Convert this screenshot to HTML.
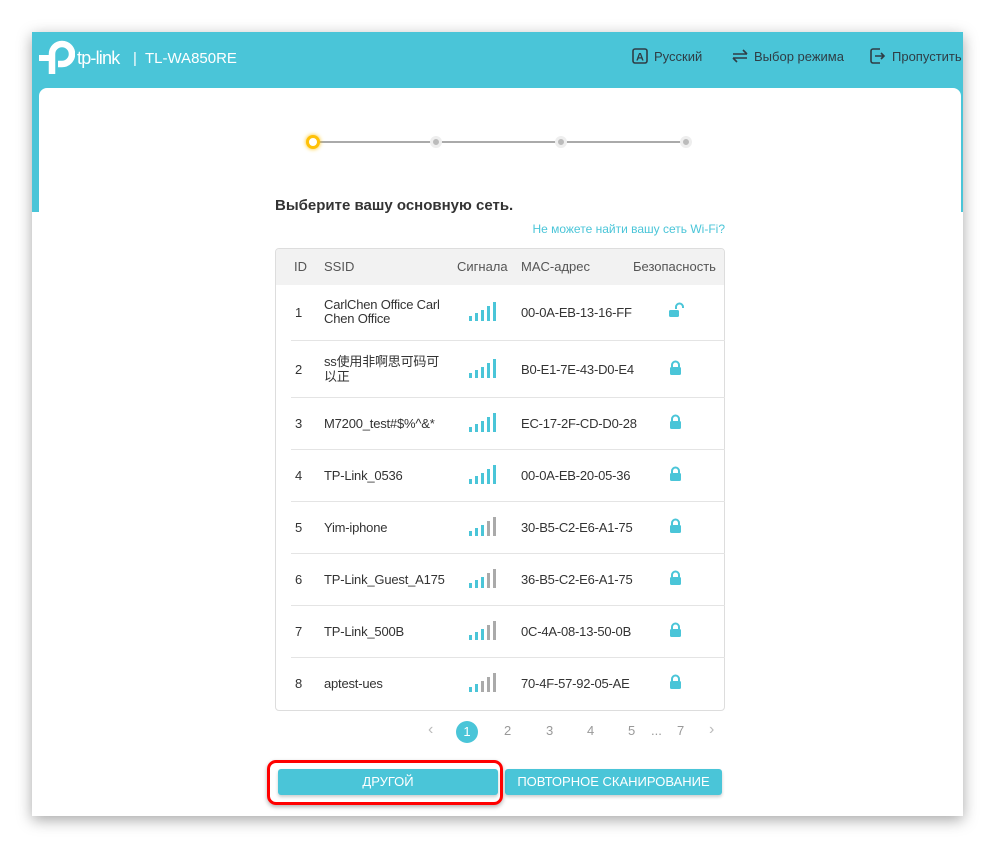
<!DOCTYPE html>
<html><head><meta charset="utf-8"><style>
*{box-sizing:border-box;margin:0;padding:0}
body{width:996px;height:849px;background:#fff;position:relative;overflow:hidden;font-family:"Liberation Sans","Noto Sans CJK SC",sans-serif;color:#333}
.win{position:absolute;left:32px;top:32px;width:931px;height:784px;background:#fff;box-shadow:0 4px 14px rgba(0,0,0,.35)}
.hdr{position:absolute;left:0;top:0;width:100%;height:180px;background:#4ac5d8}
.card{position:absolute;left:7px;top:56px;width:922px;height:728px;background:#fff;border-radius:8px 8px 0 0}
.logo{position:absolute;left:7px;top:6px;color:#fff}
.nav{position:absolute;top:16px;font-size:13px;color:#2f3d45;display:flex;align-items:center}
.step{position:absolute;top:104px;width:12px;height:12px;border-radius:50%;background:#bbb;border:3px solid #eee}
.tbl{position:absolute;left:275px;top:248px;width:450px;height:463px;border:1px solid #ddd;border-radius:4px;overflow:hidden}
.th{height:36px;background:#f2f2f2;font-size:13px;color:#555;position:relative}
.row{position:absolute;left:16px;right:0;border-bottom:1px solid #e4e4e4;font-size:13px;color:#333;letter-spacing:-0.2px}
.row span{position:absolute}
.pg{position:absolute;top:723px;font-size:13px;color:#999}
.btn{position:absolute;top:769px;height:26px;background:#4ac5d8;color:#fff;font-size:13px;text-align:center;line-height:26px;border-radius:3px;box-shadow:0 2px 3px rgba(0,0,0,.2)}
</style></head><body>
<div class="win">
<div class="hdr"></div>
<div class="logo">
<svg width="36" height="36" viewBox="0 0 36 36" style="position:absolute;left:0;top:2px"><path d="M13 34V14a10 10 0 1 1 10 10h-4" fill="none" stroke="#fff" stroke-width="6.5"/><rect x="0" y="15" width="11" height="6" fill="#fff"/></svg>
<span style="position:absolute;left:38px;top:10px;font-size:18px;white-space:nowrap;letter-spacing:-0.8px">tp-link</span>
<span style="position:absolute;left:94px;top:12px;font-size:15px;white-space:nowrap">|&nbsp; TL-WA850RE</span>
</div>
<div class="nav" style="left:600px"><svg width="16" height="16" style="margin-right:6px"><rect x="1" y="1" width="14" height="14" rx="2" fill="none" stroke="#2f3d45" stroke-width="1.6"/><text x="8" y="12.5" font-size="11" font-weight="bold" text-anchor="middle" fill="#2f3d45" font-family="Liberation Sans">A</text></svg>Русский</div>
<div class="nav" style="left:700px"><svg width="16" height="16" style="margin-right:6px"><path d="M1 6h14M11 2l4 4M15 10H1M5 14l-4-4" fill="none" stroke="#2f3d45" stroke-width="1.6"/></svg>Выбор режима</div>
<div class="nav" style="left:838px"><svg width="16" height="16" style="margin-right:6px"><path d="M10 1H3a2 2 0 0 0-2 2v10a2 2 0 0 0 2 2h7M5 8h9M11 5l3 3-3 3" fill="none" stroke="#2f3d45" stroke-width="1.6"/></svg>Пропустить</div>
<div class="card"></div>
</div>
<div style="position:absolute;left:313px;top:141px;width:374px;height:2px;background:#aaa"></div>
<div class="step" style="left:306px;top:135px;width:14px;height:14px;background:#fff;border:3px solid #ffc107;box-shadow:0 0 4px #ffc107"></div>
<div class="step" style="left:430px;top:136px"></div>
<div class="step" style="left:555px;top:136px"></div>
<div class="step" style="left:680px;top:136px"></div>
<div style="position:absolute;left:275px;top:197px;font-size:15px;font-weight:bold;color:#333">Выберите вашу основную сеть.</div>
<div style="position:absolute;right:271px;top:222px;font-size:12px;color:#4ac5d8">Не можете найти вашу сеть Wi-Fi?</div>
<div class="tbl">
<div class="th"><span style="position:absolute;left:18px;top:10px">ID</span><span style="position:absolute;left:48px;top:10px">SSID</span><span style="position:absolute;left:181px;top:10px">Сигнала</span><span style="position:absolute;left:245px;top:10px">MAC-адрес</span><span style="position:absolute;left:357px;top:10px">Безопасность</span></div>
</div>
<div style="position:absolute;left:275px;top:248px;width:450px;">
<div class="row" style="top:36px;height:57px"><span style="left:4px;top:21px">1</span><span style="left:33px;top:14px;line-height:14px;width:130px">CarlChen Office Carl Chen Office</span><span style="left:230px;top:21px">00-0A-EB-13-16-FF</span></div>
<div class="row" style="top:93px;height:57px"><span style="left:4px;top:21px">2</span><span style="left:33px;top:13px;line-height:15px;width:120px">ss使用非啊思可码可以正</span><span style="left:230px;top:21px">B0-E1-7E-43-D0-E4</span></div>
<div class="row" style="top:150px;height:52px"><span style="left:4px;top:18px">3</span><span style="left:33px;top:18px">M7200_test#$%^&amp;*</span><span style="left:230px;top:18px">EC-17-2F-CD-D0-28</span></div>
<div class="row" style="top:202px;height:52px"><span style="left:4px;top:18px">4</span><span style="left:33px;top:18px">TP-Link_0536</span><span style="left:230px;top:18px">00-0A-EB-20-05-36</span></div>
<div class="row" style="top:254px;height:52px"><span style="left:4px;top:18px">5</span><span style="left:33px;top:18px">Yim-iphone</span><span style="left:230px;top:18px">30-B5-C2-E6-A1-75</span></div>
<div class="row" style="top:306px;height:52px"><span style="left:4px;top:18px">6</span><span style="left:33px;top:18px">TP-Link_Guest_A175</span><span style="left:230px;top:18px">36-B5-C2-E6-A1-75</span></div>
<div class="row" style="top:358px;height:52px"><span style="left:4px;top:18px">7</span><span style="left:33px;top:18px">TP-Link_500B</span><span style="left:230px;top:18px">0C-4A-08-13-50-0B</span></div>
<div class="row" style="top:410px;height:52px;border:none"><span style="left:4px;top:18px">8</span><span style="left:33px;top:18px">aptest-ues</span><span style="left:230px;top:18px">70-4F-57-92-05-AE</span></div>
</div>
<svg width="996" height="849" style="position:absolute;left:0;top:0">
<defs>
<g id="s5"><rect x="0" y="14" width="3" height="5" fill="#4ac5d8"/><rect x="6" y="11" width="3" height="8" fill="#4ac5d8"/><rect x="12" y="8" width="3" height="11" fill="#4ac5d8"/><rect x="18" y="4" width="3" height="15" fill="#4ac5d8"/><rect x="24" y="0" width="3" height="19" fill="#4ac5d8"/></g>
<g id="s3"><rect x="0" y="14" width="3" height="5" fill="#4ac5d8"/><rect x="6" y="11" width="3" height="8" fill="#4ac5d8"/><rect x="12" y="8" width="3" height="11" fill="#4ac5d8"/><rect x="18" y="4" width="3" height="15" fill="#aaa"/><rect x="24" y="0" width="3" height="19" fill="#aaa"/></g>
<g id="s2"><rect x="0" y="14" width="3" height="5" fill="#4ac5d8"/><rect x="6" y="11" width="3" height="8" fill="#4ac5d8"/><rect x="12" y="8" width="3" height="11" fill="#aaa"/><rect x="18" y="4" width="3" height="15" fill="#aaa"/><rect x="24" y="0" width="3" height="19" fill="#aaa"/></g>
<g id="lk"><path d="M3 6V4a3.5 3.5 0 0 1 7 0v2" fill="none" stroke="#4ac5d8" stroke-width="2"/><rect x="1" y="6" width="11" height="8" rx="1.5" fill="#4ac5d8"/></g>
</defs>
<g transform="translate(469,0)"><use href="#s5" y="302"/><use href="#s5" y="359"/><use href="#s5" y="413"/><use href="#s5" y="465"/><use href="#s3" y="517"/><use href="#s3" y="569"/><use href="#s3" y="621"/><use href="#s2" y="673"/></g>
<g transform="translate(669,0)">
<g transform="translate(0,303)"><path d="M7 6V4a3.5 3.5 0 0 1 7 0v1" fill="none" stroke="#4ac5d8" stroke-width="2"/><rect x="0" y="7" width="10" height="7" rx="1.5" fill="#4ac5d8"/></g>
<use href="#lk" y="361"/><use href="#lk" y="415"/><use href="#lk" y="467"/><use href="#lk" y="519"/><use href="#lk" y="571"/><use href="#lk" y="623"/><use href="#lk" y="675"/></g>
</svg>
<span class="pg" style="left:428px;font-size:16px;top:721px;color:#bbb">‹</span>
<div style="position:absolute;left:456px;top:721px;width:22px;height:22px;border-radius:50%;background:#4ac5d8;color:#fff;font-size:13px;text-align:center;line-height:22px">1</div>
<span class="pg" style="left:504px">2</span><span class="pg" style="left:546px">3</span><span class="pg" style="left:587px">4</span><span class="pg" style="left:628px">5</span><span class="pg" style="left:651px">...</span><span class="pg" style="left:677px">7</span>
<span class="pg" style="left:709px;font-size:16px;top:721px;color:#bbb">›</span>
<div class="btn" style="left:505px;width:217px">ПОВТОРНОЕ СКАНИРОВАНИЕ</div>
<div class="btn" style="left:278px;width:220px">ДРУГОЙ</div>
<div style="position:absolute;left:267px;top:760px;width:236px;height:45px;border:3px solid #f00;border-radius:9px;box-shadow:0 2px 4px rgba(0,0,0,.3)"></div>
</body></html>
